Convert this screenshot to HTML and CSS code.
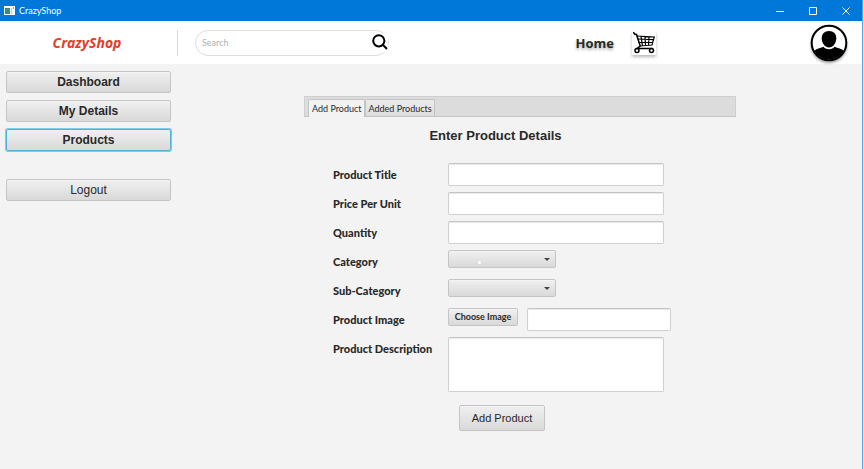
FILE: index.html
```html
<!DOCTYPE html>
<html lang="en">
<head>
<meta charset="utf-8">
<title>CrazyShop</title>
<link rel="stylesheet" href="styles.css">
</head>
<body>
<div class="window">
  <div class="titlebar">
    <svg class="app-icon" width="11" height="9" viewBox="0 0 11 9" aria-hidden="true">
      <rect width="11" height="9" fill="#f4f8f8"/>
      <rect x="1" y="2" width="5" height="6" fill="#3f8b78"/>
      <rect x="7" y="2" width="1" height="6" fill="#b9c9cc"/>
      <rect x="9" y="1" width="1" height="2" fill="#8fa5ad"/>
    </svg>
    <span class="window-title">CrazyShop</span>
    <div class="window-controls">
      <button type="button" aria-label="Minimize"><svg width="8" height="8" viewBox="0 0 8 8"><path d="M0 4.500h8"/></svg></button>
      <button type="button" aria-label="Maximize"><svg width="8" height="8" viewBox="0 0 8 8"><path d="M.5 .5h7v7h-7z"/></svg></button>
      <button type="button" aria-label="Close"><svg width="8" height="8" viewBox="0 0 8 8"><path d="M.5 .5l7 7M7.500 .5l-7 7"/></svg></button>
    </div>
  </div>

  <header class="header">
    <div class="brand">CrazyShop</div>
    <form class="search">
      <input type="text" placeholder="Search" aria-label="Search">
      <button type="button" aria-label="Run search">
        <svg width="16" height="16" viewBox="0 0 16 16"><circle cx="6.800" cy="6.800" r="5.600"/><path d="M10.800 10.800l4.200 4.200"/></svg>
      </button>
    </form>
    <nav class="nav">
      <a href="#" class="home">Home</a>
      <a href="#" class="cart" aria-label="Cart">
        <svg width="24" height="24" viewBox="0 0 24 24">
          <path d="M1.500 1l1 2 2 .5 3.700 11.500-3.200 2.500h15.500" stroke-width="1.500"/>
          <path d="M4.500 5l17.800 1-2.300 8-12.500 1M5.500 8l16 .7M6.500 11.500l14.500-.2M9 5.300l1.500 9.500M13 5.500l.5 9M17 5.700l-.5 8.600" stroke-width="1.200"/>
          <circle cx="5" cy="19.500" r="2"/><circle cx="19.500" cy="19.500" r="2"/>
        </svg>
      </a>
    </nav>
    <a href="#" class="avatar" aria-label="Profile">
      <svg width="38" height="38" viewBox="0 0 38 38">
        <circle cx="19" cy="19" r="17.500" fill="#fff"/>
        <path d="M4 27c2.500-2 6-3 9.500-4.200 1.500 3.300 9.500 3.300 11 0C28 24 31.500 25 34 27A17.500 17.500 0 0 1 4 27z"/>
        <path d="M19 7c-4.600 0-7.300 3-7.300 7.300 0 5 3.500 9.300 7.300 9.300s7.300-4.300 7.300-9.300C26.300 10 23.600 7 19 7z"/>
        <circle cx="19" cy="19" r="17.300" fill="none" stroke="#000" stroke-width="2"/>
      </svg>
    </a>
  </header>

  <div class="body">
    <aside class="sidebar">
      <button type="button" class="btn">Dashboard</button>
      <button type="button" class="btn">My Details</button>
      <button type="button" class="btn active">Products</button>
      <button type="button" class="btn logout">Logout</button>
    </aside>

    <main class="main">
      <div class="tabs" role="tablist">
        <button type="button" role="tab" aria-selected="true" class="tab selected">Add Product</button>
        <button type="button" role="tab" aria-selected="false" class="tab">Added Products</button>
      </div>
      <form class="panel">
        <h1>Enter Product Details</h1>
        <div class="fields">
          <label for="title">Product Title</label>
          <input id="title" type="text" class="field">
          <label for="price">Price Per Unit</label>
          <input id="price" type="text" class="field">
          <label for="quantity">Quantity</label>
          <input id="quantity" type="text" class="field">
          <label for="category">Category</label>
          <div class="combo"><select id="category" class="btn"></select><span class="dot"></span></div>
          <label for="subcategory">Sub-Category</label>
          <div class="combo"><select id="subcategory" class="btn"></select></div>
          <label for="image">Product Image</label>
          <div class="image-row">
            <button type="button" class="btn choose">Choose Image</button>
            <input id="image" type="text" class="field">
          </div>
          <label for="description">Product Description</label>
          <textarea id="description" class="field"></textarea>
        </div>
        <button type="button" class="btn submit">Add Product</button>
      </form>
    </main>
  </div>
</div>
</body>
</html>
```
FILE: styles.css
```css
* { box-sizing: border-box; }

body {
  margin: 0;
  background: #d9e9f5;
  color: #292929;
  font-family: "Open Sans", "Noto Sans", sans-serif;
}

button, input, select, textarea { font: inherit; color: inherit; margin: 0; }
a { color: inherit; text-decoration: none; }
svg { display: block; }

.window {
  display: flex;
  flex-direction: column;
  min-height: 100vh;
  margin-right: 1px;
  border-right: 1px solid #5ca2dc;
  background: #f3f3f3;
}

.titlebar {
  display: flex;
  align-items: center;
  height: 21px;
  padding-left: 4px;
  background: #0078d9;
  color: #fff;
}
.app-icon { margin-right: 4px; }
.window-title { font-family: Lato, sans-serif; font-size: 9px; }
.window-controls { display: flex; margin-left: auto; }
.window-controls button {
  display: flex;
  align-items: center;
  justify-content: center;
  width: 33px;
  height: 20px;
  padding: 0;
  border: 0;
  background: none;
}
.window-controls path { fill: none; stroke: #fff; }

.header {
  display: flex;
  align-items: center;
  height: 43px;
  padding-right: 14px;
  background: #fff;
}
.brand {
  width: 178px;
  height: 26px;
  padding-right: 3px;
  border-right: 1px solid #d8d8d8;
  color: #e33d29;
  font-size: 14px;
  font-style: italic;
  font-weight: 700;
  line-height: 26px;
  text-align: center;
}
.search {
  display: flex;
  align-items: center;
  width: 194px;
  height: 26px;
  margin-left: 17px;
  padding: 0 0 0 6px;
  border: 1px solid #dedede;
  border-radius: 13px;
}
.search input {
  flex: 1;
  min-width: 0;
  padding: 0;
  border: 0;
  outline: 0;
  background: none;
  font-family: Lato, sans-serif;
  font-size: 9px;
}
.search input::placeholder { color: #b0b0b0; opacity: 1; }
.search button { padding: 0 0 2px; border: 0; background: #fff; }
.search svg { fill: none; stroke: #000; stroke-width: 2; }

.nav { display: flex; align-items: center; gap: 18px; margin: 0 154px 0 auto; }
.home { font-size: 13px; font-weight: 700; text-shadow: 0 2px 3px #aaa; }
.cart { background: #fff; box-shadow: 0 2px 3px #bbb; }
.cart svg { fill: none; stroke: #000; stroke-width: 1.5; }
.avatar svg { filter: drop-shadow(0 2px 1px #aaa); }

.btn {
  border: 1px solid #c4c4c4;
  border-radius: 2px;
  background: linear-gradient(#f0f0f0, #d9d9d9);
  box-shadow: inset 0 1px #f4f4f4;
}

.body { display: flex; flex: 1; }
.sidebar {
  display: flex;
  flex-direction: column;
  gap: 7px;
  width: 172px;
  padding: 7px 1px 0 6px;
}
.sidebar .btn {
  height: 22px;
  padding: 0;
  font-family: "Liberation Sans", sans-serif;
  font-size: 12px;
  font-weight: 700;
}
.sidebar .active { border-color: #4bb4d8; box-shadow: 0 0 0 1px #7dcbe6; }
.sidebar .logout { margin-top: 21px; font-weight: 400; }

.main { width: 432px; margin: 32px auto 0 132px; }
.tabs {
  display: flex;
  align-items: flex-end;
  height: 21px;
  padding-left: 3px;
  border: 1px solid #cfcfcf;
  border-bottom-color: #c4c4c4;
  background: #dcdcdc;
}
.tab {
  height: 17px;
  padding: 0 2px;
  border: 1px solid #c4c4c4;
  border-bottom: 0;
  border-radius: 2px 2px 0 0;
  background: linear-gradient(#ececec, #dcdcdc);
  font-family: Lato, sans-serif;
  font-size: 9px;
  line-height: 17px;
}
.tab.selected { background: #f3f3f3; margin-bottom: -1px; height: 18px; padding: 0 3px; }

.panel { padding: 9px 0 0 29px; }
h1 {
  margin: 0 50px 18px 0;
  font: 700 13px/19px "Liberation Sans", sans-serif;
  padding-right: 28px;
  text-align: center;
}
.fields {
  display: grid;
  grid-template-columns: 115px 216px;
  grid-template-rows: repeat(6, 23px) 55px;
  gap: 6px 0;
}
.fields label {
  font-family: Lato, sans-serif;
  font-size: 11px;
  font-weight: 900;
  line-height: 23px;
  white-space: nowrap;
}
.field {
  width: 100%;
  height: 23px;
  padding: 2px 6px;
  border: 1px solid #d0d0d0;
  border-top-color: #c4c4c4;
  border-radius: 2px;
  outline: 0;
  background: #fff;
  box-shadow: inset 0 1px 1px #e8e8e8;
  font-size: 10px;
}
textarea.field { height: 55px; resize: none; }
.combo { position: relative; width: 108px; height: 18px; }
.combo select { display: block; width: 100%; height: 18px; appearance: none; }
.combo::after {
  content: "";
  position: absolute;
  top: 8px;
  right: 6px;
  border: 3px solid transparent;
  border-top-color: #444;
  border-bottom: 0;
}
.dot {
  position: absolute;
  top: 11px;
  left: 30px;
  width: 3px;
  height: 3px;
  border-radius: 50%;
  background: #fff;
}
.image-row { display: flex; align-items: flex-start; gap: 9px; width: 223px; }
.choose {
  flex: none;
  width: 70px;
  height: 18px;
  padding: 0;
  font-family: Lato, sans-serif;
  font-size: 9px;
  font-weight: 700;
  line-height: 16px;
}
.submit {
  display: block;
  width: 86px;
  height: 26px;
  margin: 13px 0 0 126px;
  padding: 0;
  font-family: "Liberation Sans", sans-serif;
  font-size: 11px;
}
```
